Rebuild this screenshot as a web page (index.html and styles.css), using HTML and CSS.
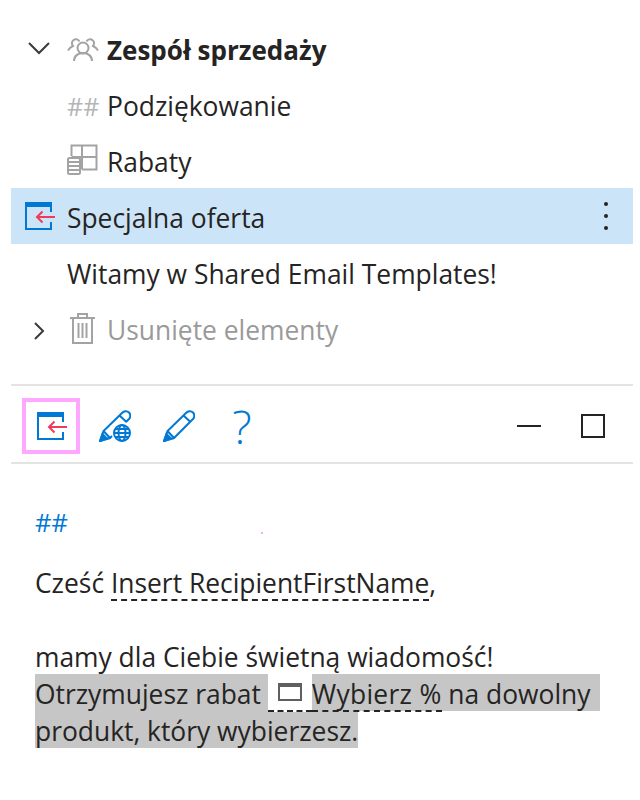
FILE: index.html
```html
<!DOCTYPE html>
<html lang="en">
  <head>
    <meta charset="UTF-8" />
    <meta name="viewport" content="width=device-width, initial-scale=1.0" />
    <title>Shared Email Templates</title>
    <link rel="stylesheet" href="styles.css">
  </head>
  <body>
    <ul class="tree">
      <li class="row">
        <span class="arrow">
          <svg width="24" height="24" viewBox="0 0 24 24"><path d="M2 7l10 10L22 7" class="stroke-dark"/></svg>
        </span>
        <span class="icon">
          <svg width="32" height="32" viewBox="0 0 32 32" class="stroke-gray">
            <circle cx="16" cy="16" r="5.500"/>
            <path d="M7 29c0-5 4-8 9-8s9 3 9 8"/>
            <path d="M12.500 9.500a4 4 0 1 0-6.500 4.500c-2 1-4 2.500-5 4.500"/>
            <path d="M19.500 9.500a4 4 0 1 1 6.500 4.500c2 1 4 2.500 5 4.500"/>
          </svg>
        </span>
        <b class="label">Zespół sprzedaży</b>
      </li>
      <li class="row">
        <span class="arrow"></span>
        <span class="icon hashes">##</span>
        <span class="label">Podziękowanie</span>
      </li>
      <li class="row">
        <span class="arrow"></span>
        <span class="icon">
          <svg width="32" height="32" viewBox="0 0 32 32" class="stroke-gray">
            <path d="M4.500 12V1.500h25v24H15M15 1.500v24M4.500 13h25"/>
            <rect x="1" y="14" width="12" height="16" rx="1.500"/>
            <path d="M1 18h12M1 22h12M1 26h12"/>
          </svg>
        </span>
        <span class="label">Rabaty</span>
      </li>
      <li class="row row-selected">
        <span class="doc-icon">
          <svg width="30" height="30" viewBox="0 0 30 30" class="overflow">
            <use href="#insert-icon"/>
          </svg>
        </span>
        <span class="label">Specjalna oferta</span>
        <span class="dots"><i></i><i></i><i></i></span>
      </li>
      <li class="row row-plain">
        <span class="label">Witamy w Shared Email Templates!</span>
      </li>
      <li class="row row-muted">
        <span class="arrow">
          <svg width="24" height="24" viewBox="0 0 24 24"><path d="M8 4l8 8-8 8" class="stroke-dark"/></svg>
        </span>
        <span class="icon">
          <svg width="32" height="32" viewBox="0 0 32 32" class="stroke-gray">
            <path d="M3 6h25M6 6v25h19V6M11 6V2h9v4M11.500 11v15M15.500 11v15M19.500 11v15"/>
          </svg>
        </span>
        <span class="label">Usunięte elementy</span>
      </li>
    </ul>

    <div class="toolbar">
      <button class="tool tool-active">
        <svg width="30" height="30" viewBox="0 0 30 30" class="overflow">
          <g id="insert-icon">
            <path d="M1 1h27v5H1z" fill="#0078d4"/>
            <path d="M2 6v22h25v-7M27 6v5" fill="none" stroke="#0078d4" stroke-width="2"/>
            <path d="M31 16H13M18.500 10.500L13 16l5.500 5.500" fill="none" stroke="#ee3b5b" stroke-width="2"/>
          </g>
        </svg>
      </button>
      <button class="tool">
        <svg width="32" height="32" viewBox="0 0 32 32" class="stroke-blue">
          <path d="M1 31l3.500-10L23 3c2-2 5-2.500 7-.5s1.500 5 0 6.500l-3 3M1 31l10-3 2-2M4.500 21l6.500 7M20.500 5.500l7 6.500"/>
          <path d="M1 31l2.500-7 4.500 4.500z" fill="#0078d4"/>
          <circle cx="23" cy="23" r="8"/>
          <ellipse cx="23" cy="23" rx="3.500" ry="8"/>
          <path d="M15 23h16M16 19h14M16 27h14"/>
        </svg>
      </button>
      <button class="tool">
        <svg width="32" height="32" viewBox="0 0 32 32" class="stroke-blue">
          <path d="M1 31l3.500-10L23 3c2-2 5-2.500 7-.5s1.500 5 0 6.500L11 28zM4.500 21l6.500 7M20.500 5.500l7 6.500"/>
          <path d="M1 31l2.500-7 4.500 4.500z" fill="#0078d4"/>
        </svg>
      </button>
      <span class="tool tool-help">?</span>
      <span class="toolbar-space"></span>
      <span class="win-btn"><i class="win-min"></i></span>
      <span class="win-btn"><i class="win-max"></i></span>
    </div>

    <div class="preview">
      <p class="tag">##<i class="speck"></i></p>
      <p class="line">Cześć <span class="field">Insert RecipientFirstName</span>,</p>
      <p class="line blank"></p>
      <p class="line">mamy dla Ciebie świetną wiadomość!</p>
      <p class="line sel sel-first">Otrzymujesz rabat&nbsp;<span class="dropdown"><i class="drop-box"></i></span><span class="field field-percent">Wybierz %</span>&nbsp;na dowolny</p>
      <p class="line sel">produkt, który wybierzesz.</p>
    </div>
  </body>
</html>
```

FILE: styles.css
```css
* {
  box-sizing: border-box;
}
body {
  margin: 0;
  padding: 20px 7px 0 11px;
  font-family: "Open Sans", sans-serif;
  font-size: 26.4px;
  color: #252423;
  background-color: white;
}
b {
  font-size: 26px;
}
svg {
  display: block;
  fill: none;
}
.overflow {
  overflow: visible;
}
.stroke-dark {
  fill: none;
  stroke: #3b3a39;
  stroke-width: 2;
}
.stroke-gray {
  stroke: #a3a3a3;
  stroke-width: 2;
}
.stroke-blue {
  stroke: #0078d4;
  stroke-width: 2;
}
.tree {
  list-style: none;
  margin: 0;
  padding: 0;
}
.row {
  display: flex;
  align-items: center;
  height: 56px;
  padding-left: 16px;
}
.row-selected {
  background-color: #cce4f7;
  padding-left: 13px;
}
.row-plain {
  padding-left: 56px;
}
.row-muted {
  color: #9a9a9a;
}
.row-muted .arrow {
  margin-top: 6px;
}
.arrow {
  width: 40px;
  height: 24px;
  flex: none;
}
.icon {
  width: 40px;
  flex: none;
  display: flex;
  align-items: center;
}
.hashes {
  color: #b5b5b5;
  font-size: 25px;
  padding-top: 3px;
}
.doc-icon {
  width: 43px;
  flex: none;
}
.label {
  white-space: nowrap;
  padding-top: 3px;
}
.dots {
  margin-left: auto;
  margin-right: 25px;
  display: flex;
  flex-direction: column;
  gap: 8px;
}
.dots i {
  width: 4px;
  height: 4px;
  border-radius: 50%;
  background-color: #252423;
}
.toolbar {
  display: flex;
  align-items: center;
  height: 80px;
  margin-top: 28px;
  border-top: 2px solid #e3e3e3;
  border-bottom: 2px solid #e3e3e3;
  padding: 4px 8px 0 11px;
}
.tool {
  width: 58px;
  height: 56px;
  padding: 0;
  margin-right: 6px;
  border: none;
  background: none;
  display: flex;
  align-items: center;
  justify-content: center;
}
.tool-active {
  border: 4px solid #ffa8ff;
}
.tool-help {
  color: #0078d4;
  font-size: 46px;
  font-weight: 300;
  width: 56px;
  margin-right: 0;
}
.toolbar-space {
  flex: 1;
}
.win-btn {
  width: 64px;
  display: flex;
  justify-content: center;
}
.win-min {
  width: 24px;
  height: 2px;
  background-color: #252423;
}
.win-max {
  width: 24px;
  height: 24px;
  border: 2px solid #252423;
}
.preview {
  padding: 40px 0 0 24px;
}
.preview p {
  margin: 0;
  height: 37px;
  line-height: 41px;
  white-space: pre;
}
.preview .tag {
  position: relative;
  color: #0078d4;
  font-size: 25.5px;
  line-height: 37px;
  margin-bottom: 22px;
}
.speck {
  position: absolute;
  left: 226px;
  top: 28px;
  width: 2px;
  height: 2px;
  background-color: #ffa8ff;
}
.field {
  display: inline-block;
  height: 38px;
  border-bottom: 2px dashed #252423;
}
.field-percent {
  letter-spacing: 0.3px;
}
.sel {
  width: fit-content;
  background-color: #c6c6c6;
}
.sel-first {
  padding-right: 10px;
}
.dropdown {
  display: inline-flex;
  vertical-align: top;
  align-items: center;
  justify-content: center;
  width: 44px;
  height: 38px;
  background-color: white;
  border-bottom: 2px dashed #252423;
}
.drop-box {
  width: 24px;
  height: 18px;
  border: 2px solid #5f5f5f;
  border-top-width: 4px;
}
```
